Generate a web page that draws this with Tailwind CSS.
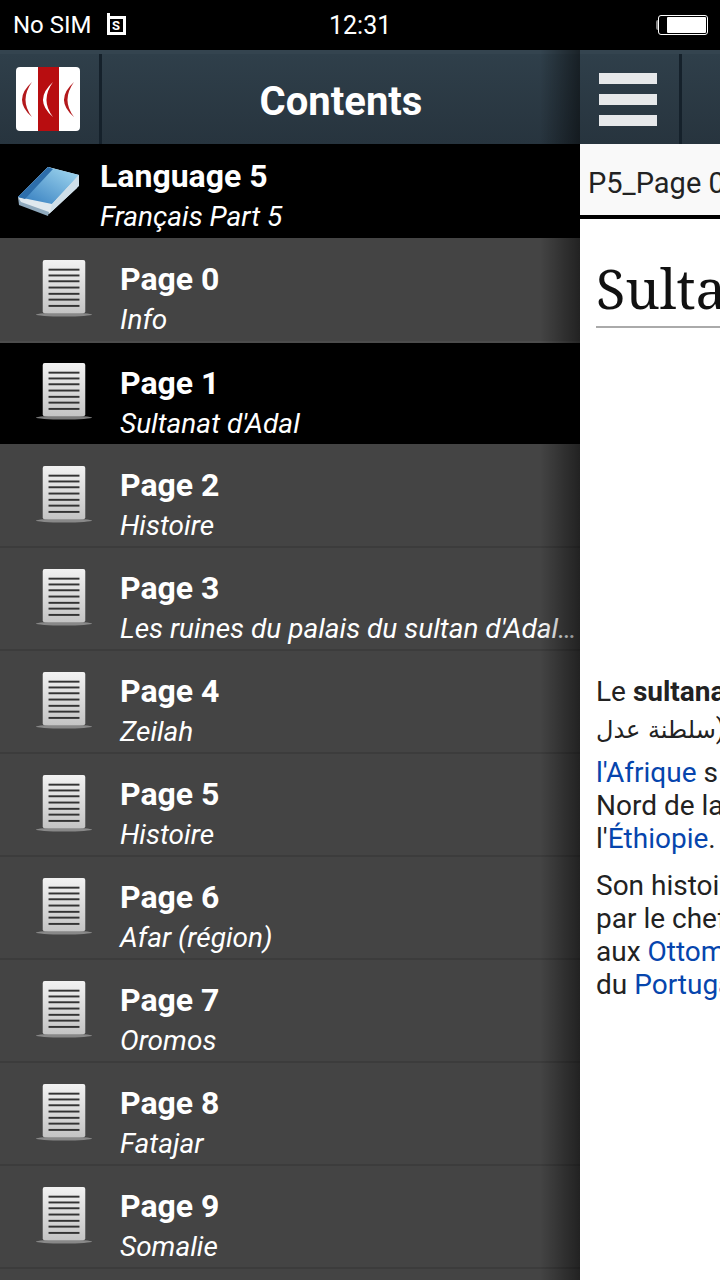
<!DOCTYPE html>
<html>
<head>
<meta charset="utf-8">
<script src="https://cdn.jsdelivr.net/npm/@tailwindcss/browser@4"></script>
</head>
<body class="m-0 bg-black">
<svg width="0" height="0" class="absolute">
  <defs>
    <linearGradient id="pg" x1="0" y1="0" x2="0" y2="1"><stop offset="0" stop-color="#f2f2f2"/><stop offset="1" stop-color="#c4c4c4"/></linearGradient>
    <linearGradient id="bk" x1="0" y1="1" x2="1" y2="0"><stop offset="0" stop-color="#2f79bd"/><stop offset="1" stop-color="#a6dcf2"/></linearGradient>
    <symbol id="doc" viewBox="0 0 60 60">
      <ellipse cx="30" cy="56.5" rx="29" ry="2" fill="#9a9a9a" opacity=".8"/>
      <rect x="8" y="0" width="44" height="55" rx="2" fill="url(#pg)"/>
      <g fill="#333"><rect x="14" y="9" width="32" height="2"/><rect x="14" y="15" width="32" height="2"/><rect x="14" y="21" width="32" height="2"/><rect x="14" y="27.500" width="32" height="2"/><rect x="14" y="34" width="32" height="2"/><rect x="14" y="40" width="32" height="2"/><rect x="14" y="46.500" width="32" height="2"/></g>
    </symbol>
  </defs>
</svg>
<div class="relative w-[720px] h-[1280px] overflow-hidden bg-black font-['Roboto',sans-serif]">
  <!-- status bar -->
  <div class="relative flex h-[50px] items-center justify-between bg-black pl-[13px] pr-[12px] text-white">
    <div class="flex items-center gap-[15px]">
      <span class="text-[24px] leading-none">No SIM</span>
      <span class="relative flex h-[19px] w-[19px] items-center justify-center border-[3px] border-white text-[13px] font-bold leading-none">S<span class="absolute -left-[3px] -top-[6px] h-[3px] w-[3px] bg-white"></span></span>
    </div>
    <span class="absolute left-[329px] top-[11px] text-[25px] leading-[30px]">12:31</span>
    <div class="flex items-center">
      <span class="h-[10px] w-[2px] rounded-l-full bg-[#888]"></span>
      <span class="flex h-[20px] w-[50px] justify-end rounded-[3px] border border-white p-[1px] pl-0"><span class="h-full w-[39px] rounded-[1px] bg-white"></span></span>
    </div>
  </div>
  <div class="flex">
    <!-- drawer -->
    <div class="relative w-[580px] shrink-0">
      <div class="flex h-[94px] border-t-[4px] border-[#34444f] bg-gradient-to-b from-[#2f3f4a] to-[#27343e]">
        <div class="flex w-[99px] items-center justify-center pr-[3px]">
          <svg width="64" height="64" viewBox="0 0 64 64">
            <rect width="64" height="64" rx="4" fill="#fff"/>
            <rect x="22" width="21" height="64" fill="#b80d10"/>
            <path d="M16 15 Q-4 33 16 50 Q3 33 16 15Z" fill="#b3191c"/>
            <path d="M37 15 Q17 33 37 50 Q24 33 37 15Z" fill="#fff"/>
            <path d="M58 15 Q38 33 58 50 Q45 33 58 15Z" fill="#b3191c"/>
          </svg>
        </div>
        <div class="w-[3px] bg-[#15212b]"></div>
        <div class="flex flex-1 items-center justify-center pt-[6px] text-[40px] font-bold text-white">Contents</div>
      </div>
      <!-- language -->
      <div class="flex h-[94px] items-center bg-black">
        <div class="flex w-[100px] justify-center pr-[3px]">
          <svg width="64" height="50" viewBox="0 0 64 50">
            <path d="M1 31 L31 1 L62 9 L60 22 L32 48 L3 37Z" fill="#dfe8ee"/>
            <path d="M1 31 L4 36 L32 46 L31 50 L2 39Z" fill="#8fa9bd"/>
            <path d="M1 31 L31 1 L62 9 L35 38Z" fill="url(#bk)"/>
            <path d="M1 31 L31 1 L36 3 L8 33Z" fill="#2d6eab"/>
            <path d="M35 38 L62 9 L62 20 L33 47Z" fill="#cfdfe9"/>
          </svg>
        </div>
        <div class="pt-[11px] text-white">
          <div class="text-[32px] leading-[40px] font-bold">Language 5</div>
          <div class="text-[28px] leading-[41px] italic">Français Part 5</div>
        </div>
      </div>
      <!-- pages -->
      <div class="flex h-[105px] items-center border-b-2 border-b-[#4c4c4c] bg-[#444] pl-[35px]">
        <svg width="58" height="60" class="mb-[2px] shrink-0"><use href="#doc"/></svg>
        <div class="ml-[27px] min-w-0 flex-1 pt-[20px] text-white"><div class="text-[32px] leading-[40px] font-bold">Page 0</div><div class="whitespace-nowrap text-[28px] leading-[41px] italic">Info</div></div>
      </div>
      <div class="flex h-[101px] items-center bg-black pl-[35px]">
        <svg width="58" height="60" class="mb-[4px] shrink-0"><use href="#doc"/></svg>
        <div class="ml-[27px] min-w-0 flex-1 pt-[19px] text-white"><div class="text-[32px] leading-[40px] font-bold">Page 1</div><div class="whitespace-nowrap text-[28px] leading-[41px] italic">Sultanat d'Adal</div></div>
      </div>
      <div class="flex h-[104px] items-center border-b-2 border-b-[#3c3c3c] bg-[#444] pl-[35px]">
        <svg width="58" height="60" class="shrink-0"><use href="#doc"/></svg>
        <div class="ml-[27px] min-w-0 flex-1 pt-[20px] text-white"><div class="text-[32px] leading-[40px] font-bold">Page 2</div><div class="whitespace-nowrap text-[28px] leading-[41px] italic">Histoire</div></div>
      </div>
      <div class="flex h-[103px] items-center border-b-2 border-b-[#3c3c3c] bg-[#444] pl-[35px]">
        <svg width="58" height="60" class="mb-[2px] shrink-0"><use href="#doc"/></svg>
        <div class="ml-[27px] min-w-0 flex-1 pt-[20px] text-white"><div class="text-[32px] leading-[40px] font-bold">Page 3</div><div class="whitespace-nowrap text-[28px] leading-[41px] italic">Les ruines du palais du sultan d'Adal…</div></div>
      </div>
      <div class="flex h-[103px] items-center border-b-2 border-b-[#3c3c3c] bg-[#444] pl-[35px]">
        <svg width="58" height="60" class="mb-[2px] shrink-0"><use href="#doc"/></svg>
        <div class="ml-[27px] min-w-0 flex-1 pt-[20px] text-white"><div class="text-[32px] leading-[40px] font-bold">Page 4</div><div class="whitespace-nowrap text-[28px] leading-[41px] italic">Zeilah</div></div>
      </div>
      <div class="flex h-[103px] items-center border-b-2 border-b-[#3c3c3c] bg-[#444] pl-[35px]">
        <svg width="58" height="60" class="mb-[2px] shrink-0"><use href="#doc"/></svg>
        <div class="ml-[27px] min-w-0 flex-1 pt-[20px] text-white"><div class="text-[32px] leading-[40px] font-bold">Page 5</div><div class="whitespace-nowrap text-[28px] leading-[41px] italic">Histoire</div></div>
      </div>
      <div class="flex h-[103px] items-center border-b-2 border-b-[#3c3c3c] bg-[#444] pl-[35px]">
        <svg width="58" height="60" class="mb-[2px] shrink-0"><use href="#doc"/></svg>
        <div class="ml-[27px] min-w-0 flex-1 pt-[20px] text-white"><div class="text-[32px] leading-[40px] font-bold">Page 6</div><div class="whitespace-nowrap text-[28px] leading-[41px] italic">Afar (région)</div></div>
      </div>
      <div class="flex h-[103px] items-center border-b-2 border-b-[#3c3c3c] bg-[#444] pl-[35px]">
        <svg width="58" height="60" class="mb-[2px] shrink-0"><use href="#doc"/></svg>
        <div class="ml-[27px] min-w-0 flex-1 pt-[20px] text-white"><div class="text-[32px] leading-[40px] font-bold">Page 7</div><div class="whitespace-nowrap text-[28px] leading-[41px] italic">Oromos</div></div>
      </div>
      <div class="flex h-[103px] items-center border-b-2 border-b-[#3c3c3c] bg-[#444] pl-[35px]">
        <svg width="58" height="60" class="mb-[2px] shrink-0"><use href="#doc"/></svg>
        <div class="ml-[27px] min-w-0 flex-1 pt-[20px] text-white"><div class="text-[32px] leading-[40px] font-bold">Page 8</div><div class="whitespace-nowrap text-[28px] leading-[41px] italic">Fatajar</div></div>
      </div>
      <div class="flex h-[103px] items-center border-b-2 border-b-[#3c3c3c] bg-[#444] pl-[35px]">
        <svg width="58" height="60" class="mb-[2px] shrink-0"><use href="#doc"/></svg>
        <div class="ml-[27px] min-w-0 flex-1 pt-[20px] text-white"><div class="text-[32px] leading-[40px] font-bold">Page 9</div><div class="whitespace-nowrap text-[28px] leading-[41px] italic">Somalie</div></div>
      </div>
      <div class="h-[20px] bg-[#444]"></div>
      <!-- drawer edge shadow -->
      <div class="absolute inset-y-0 right-0 w-[40px] bg-gradient-to-r from-black/0 to-black/50"></div>
    </div>
    <!-- main page -->
    <div class="w-[140px] shrink-0 overflow-hidden bg-white">
      <div class="flex h-[94px] border-t-[4px] border-[#34444f] bg-gradient-to-b from-[#2f3f4a] to-[#27343e]">
        <div class="flex w-[99px] shrink-0 flex-col items-center justify-center gap-[10px] pr-[4px]">
          <span class="h-[11px] w-[58px] bg-[#e6e8ea]"></span>
          <span class="h-[11px] w-[58px] bg-[#e6e8ea]"></span>
          <span class="h-[11px] w-[58px] bg-[#e6e8ea]"></span>
        </div>
        <div class="w-[3px] bg-[#15212b]"></div>
      </div>
      <div class="h-[75px] w-[720px] border-b-[4px] border-black bg-[#f9f9f9] pl-[8px] pt-[20px] text-[29px] leading-[38px] text-[#222]">P5_Page 0</div>
      <div class="w-[700px] pl-[16px]">
        <h1 class="mt-[33px] w-[124px] border-b-2 border-[#aaa] pb-[2px] font-['Noto_Serif','DejaVu_Serif',serif] text-[54px] leading-[72px] whitespace-nowrap text-[#111]">Sultanat d'Adal</h1>
        <div class="mt-[347px] text-[28px] leading-[33px] text-[#222] whitespace-nowrap">
          <p>Le <b>sultanat d'Adal</b></p>
          <p class="mt-[4px] h-[40px] w-[124px] leading-[34px]"><span class="font-['DejaVu_Sans',sans-serif] text-[24px]" dir="rtl">سلطنة عدل</span>)</p>
          <p class="mt-[4px]"><span class="text-[#0645ad]">l'Afrique</span> s</p>
          <p>Nord de la corne</p>
          <p>l'<span class="text-[#0645ad]">Éthiopie</span>.</p>
          <p class="mt-[14px]">Son histoire est</p>
          <p>par le chef</p>
          <p>aux <span class="text-[#0645ad]">Ottomans</span></p>
          <p>du <span class="text-[#0645ad]">Portugal</span></p>
        </div>
      </div>
    </div>
  </div>
</div>
</body>
</html>
